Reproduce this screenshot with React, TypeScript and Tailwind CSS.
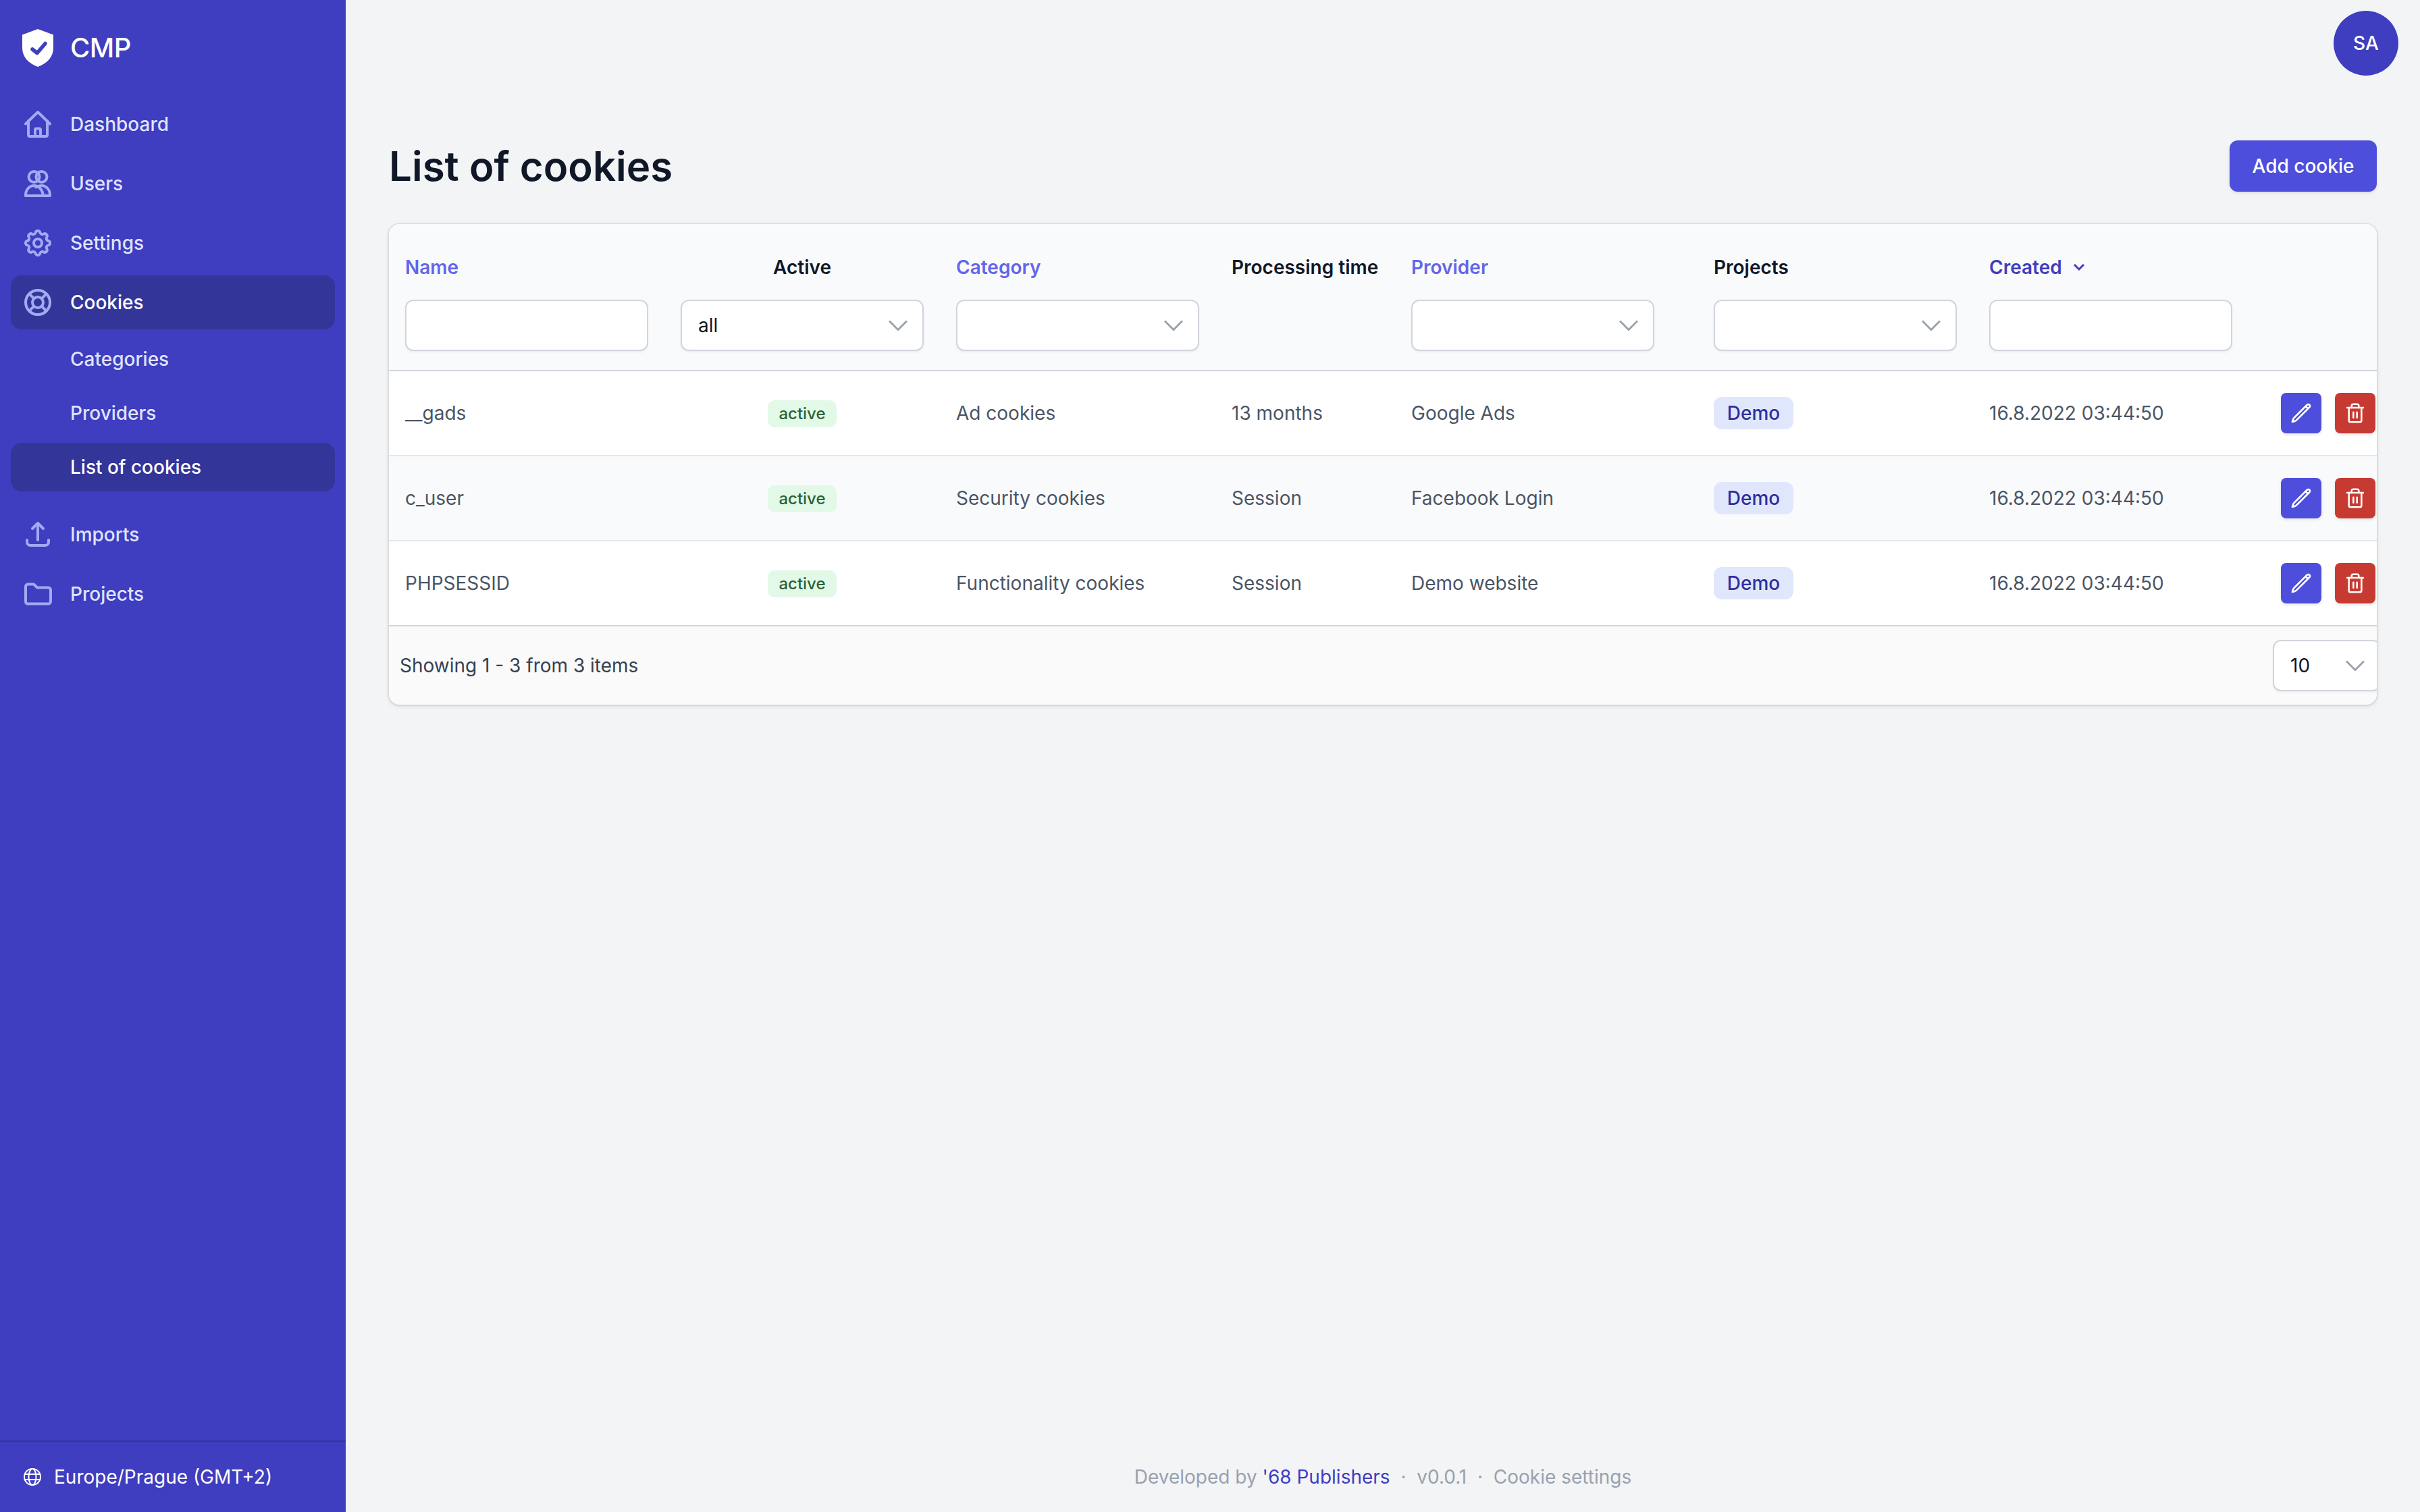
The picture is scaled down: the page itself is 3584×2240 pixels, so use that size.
import React from 'react';
import { Trash2 } from 'lucide-react';

const cookies = [
  { name: '__gads', category: 'Ad cookies', time: '13 months', provider: 'Google Ads' },
  { name: 'c_user', category: 'Security cookies', time: 'Session', provider: 'Facebook Login' },
  { name: 'PHPSESSID', category: 'Functionality cookies', time: 'Session', provider: 'Demo website' },
];

const Ico = ({ children }: { children: React.ReactNode }) => (
  <svg viewBox="0 0 48 48" fill="none" stroke="currentColor" strokeWidth="4" strokeLinecap="round" strokeLinejoin="round" className="h-12 w-12 shrink-0 text-[#a0abf2]">
    {children}
  </svg>
);

const HomeIcon = () => (
  <Ico>
    <path d="M6 23.500 24 6l18 17.500" />
    <path d="M10 19v21a2 2 0 0 0 2 2h24a2 2 0 0 0 2-2V19" />
    <path d="M20 42V32a1.500 1.500 0 0 1 1.500-1.500h5A1.500 1.500 0 0 1 28 32v10" />
  </Ico>
);

const UsersIcon = () => (
  <Ico>
    <circle cx="29.500" cy="14" r="8" />
    <circle cx="18.500" cy="14" r="8" />
    <path d="M6 42V41c0-8 5.500-14 12.500-14s12.500 6 13.500 15" />
    <path d="M6 42h36V41c0-8-5.500-14-12.500-14-3 0-6 .8-8.500 2.300" />
  </Ico>
);

const CogIcon = () => (
  <Ico>
    <g transform="scale(2)" strokeWidth="2">
      <path d="M10.325 4.317c.426-1.756 2.924-1.756 3.35 0a1.724 1.724 0 002.573 1.066c1.543-.94 3.31.826 2.37 2.37a1.724 1.724 0 001.065 2.572c1.756.426 1.756 2.924 0 3.35a1.724 1.724 0 00-1.066 2.573c.94 1.543-.826 3.31-2.37 2.37a1.724 1.724 0 00-2.572 1.065c-.426 1.756-2.924 1.756-3.35 0a1.724 1.724 0 00-2.573-1.066c-1.543.94-3.31-.826-2.37-2.37a1.724 1.724 0 00-1.065-2.572c-1.756-.426-1.756-2.924 0-3.35a1.724 1.724 0 001.066-2.573c-.94-1.543.826-3.31 2.37-2.37.996.608 2.296.07 2.572-1.065z" />
      <path d="M15 12a3 3 0 11-6 0 3 3 0 016 0z" />
    </g>
  </Ico>
);

const BuoyIcon = () => (
  <Ico>
    <circle cx="24" cy="24" r="18" />
    <circle cx="24" cy="24" r="8" />
    <path d="M11.500 11.500l6.800 6.800M29.700 18.300l6.800-6.800M29.700 29.700l6.800 6.800M18.300 29.700l-6.800 6.800" />
  </Ico>
);

const UploadIcon = () => (
  <Ico>
    <path d="M24 8v24M16 15l8-8 8 8" />
    <path d="M8 32v3a5 5 0 0 0 5 5h22a5 5 0 0 0 5-5v-3" />
  </Ico>
);

const FolderIcon = () => (
  <Ico>
    <path d="M6 13a3.500 3.500 0 0 1 3.500-3.500h8.500l5 5h16.500a3.500 3.500 0 0 1 3.500 3.500v17a3.500 3.500 0 0 1-3.500 3.500h-29A3.500 3.500 0 0 1 6 35z" />
  </Ico>
);

const Chevron = () => (
  <svg viewBox="0 0 28 16" fill="none" stroke="#9ca3af" strokeWidth="3" className="pointer-events-none absolute right-[24px] top-1/2 h-4 w-7 -translate-y-1/2">
    <path d="M1 1.500 14 14.500 27 1.500" />
  </svg>
);

const Select = ({ value, className }: { value?: string; className: string }) => (
  <div className={`relative h-[76px] ${className}`}>
    <select defaultValue={value} className="h-full w-full appearance-none rounded-[12px] border-2 border-gray-300 bg-white pl-6 text-[28px] font-normal text-gray-900 shadow-[0_2px_3px_rgba(0,0,0,0.05)]">
      <option value={value}>{value}</option>
    </select>
    <Chevron />
  </div>
);

const TextFilter = () => (
  <input className="block h-[76px] w-[360px] rounded-[12px] border-2 border-gray-300 bg-white shadow-[0_2px_3px_rgba(0,0,0,0.05)]" />
);

const NavItem = ({ icon, label, active }: { icon: React.ReactNode; label: string; active?: boolean }) => (
  <div className={`flex h-20 items-center gap-6 rounded-[16px] px-4 text-[28px] font-medium ${active ? 'bg-[#343598] text-white' : 'text-[#dfe3fc]'}`}>
    {icon}
    {label}
  </div>
);

const SubItem = ({ label, active }: { label: string; active?: boolean }) => (
  <div className={`flex h-[72px] items-center rounded-[16px] pl-[88px] text-[28px] font-medium ${active ? 'bg-[#343598] text-white' : 'text-[#dfe3fc]'}`}>
    {label}
  </div>
);

const thClass = 'px-6 pt-[44px] pb-[28px] text-left align-top text-[28px] font-semibold leading-[40px]';

const App: React.FC = () => {
  return (
    <div className="flex h-screen w-full bg-[#f3f4f6] font-[Inter,sans-serif]">
      {/* SIDEBAR */}
      <aside className="flex w-[512px] shrink-0 flex-col bg-[#3f3dc0]">
        <div className="flex h-[144px] items-center gap-[25px] pb-[2px] pl-[33px]">
          <svg viewBox="0 0 46 56" className="h-14 w-[46px]">
            <path d="M23 0 46 8.500V28c0 14-10 23-23 28C10 51 0 42 0 28V8.500z" fill="#fff" />
            <path d="m15 30 7 5.500L34 21.500" fill="none" stroke="#3f3dc0" strokeWidth="5.500" strokeLinecap="round" strokeLinejoin="round" />
          </svg>
          <span className="text-[40px] font-medium tracking-[-0.5px] text-white">CMP</span>
        </div>

        <nav className="flex flex-col gap-2 px-4">
          <NavItem icon={<HomeIcon />} label="Dashboard" />
          <NavItem icon={<UsersIcon />} label="Users" />
          <NavItem icon={<CogIcon />} label="Settings" />
          <NavItem icon={<BuoyIcon />} label="Cookies" active />
          <SubItem label="Categories" />
          <SubItem label="Providers" />
          <SubItem label="List of cookies" active />
          <div className="mt-4">
            <NavItem icon={<UploadIcon />} label="Imports" />
          </div>
          <NavItem icon={<FolderIcon />} label="Projects" />
        </nav>

        <div className="mt-auto flex h-[106px] items-center gap-[19px] border-t-2 border-[#343598] pl-[35px] text-[28px] text-white">
          <svg viewBox="0 0 26 26" fill="none" stroke="currentColor" strokeWidth="2" className="h-[26px] w-[26px]">
            <circle cx="13" cy="13" r="12" />
            <ellipse cx="13" cy="13" rx="5.500" ry="12" />
            <path d="M2 9h22M2 17h22" />
          </svg>
          Europe/Prague (GMT+2)
        </div>
      </aside>

      {/* MAIN */}
      <main className="flex min-w-0 flex-1 flex-col">
        <div className="flex justify-end pt-4 pr-8">
          <div className="flex h-24 w-24 items-center justify-center rounded-full bg-[#3f3dc0] text-[28px] font-medium text-white">SA</div>
        </div>

        <div className="mt-[96px] flex items-center justify-between px-16">
          <h1 className="text-[60px] font-semibold leading-[76px] text-gray-900">List of cookies</h1>
          <button className="flex h-[76px] w-[218px] items-center justify-center rounded-[12px] bg-[#4e4edc] text-[28px] font-medium text-white shadow-[0_2px_4px_rgba(0,0,0,0.1)]">Add cookie</button>
        </div>

        <div className="mx-16 mt-[48px] overflow-hidden rounded-[16px] bg-white shadow-[0_0_0_2px_rgba(0,0,0,0.05),0_2px_6px_rgba(0,0,0,0.12)]">
          <table className="w-full table-fixed">
            <colgroup>
              <col className="w-[408px]" />
              <col className="w-[408px]" />
              <col className="w-[408px]" />
              <col className="w-[266px]" />
              <col className="w-[448px]" />
              <col className="w-[408px]" />
              <col className="w-[408px]" />
              <col />
            </colgroup>
            <thead className="bg-[#f9fafb]">
              <tr className="border-b-2 border-gray-300">
                <th className={`${thClass} text-[#6366ea]`}>
                  Name
                  <div className="mt-[28px]"><TextFilter /></div>
                </th>
                <th className={`${thClass} text-gray-900`}>
                  <div className="text-center">Active</div>
                  <div className="mt-[28px]"><Select value="all" className="w-[360px]" /></div>
                </th>
                <th className={`${thClass} text-[#6366ea]`}>
                  Category
                  <div className="mt-[28px]"><Select className="w-[360px]" /></div>
                </th>
                <th className={`${thClass} whitespace-nowrap text-gray-900`}>Processing time</th>
                <th className={`${thClass} text-[#6366ea]`}>
                  Provider
                  <div className="mt-[28px]"><Select className="w-[360px]" /></div>
                </th>
                <th className={`${thClass} text-gray-900`}>
                  Projects
                  <div className="mt-[28px]"><Select className="w-[360px]" /></div>
                </th>
                <th className={`${thClass} text-[#3f3dc0]`}>
                  <div className="flex items-center gap-4">
                    Created
                    <svg viewBox="0 0 18 12" fill="none" stroke="currentColor" strokeWidth="3" className="h-3 w-[18px]">
                      <path d="m2 2 7 7 7-7" />
                    </svg>
                  </div>
                  <div className="mt-[28px]"><TextFilter /></div>
                </th>
                <th />
              </tr>
            </thead>
            <tbody className="text-[28px] text-gray-600">
              {cookies.map((c, i) => (
                <tr key={c.name} className={`h-[126px] border-b-2 ${i === 2 ? 'border-gray-300' : 'border-gray-200'} ${i === 1 ? 'bg-[#f9fafb]' : 'bg-white'}`}>
                  <td className="px-6">{c.name}</td>
                  <td className="px-6 text-center">
                    <span className="inline-flex h-10 w-[102px] -translate-y-[1px] items-center justify-center rounded-[10px] bg-[#e2f9e8] text-[24px] font-medium text-[#2d6235]">active</span>
                  </td>
                  <td className="px-6">{c.category}</td>
                  <td className="px-6">{c.time}</td>
                  <td className="px-6">{c.provider}</td>
                  <td className="px-6">
                    <span className="inline-flex h-12 w-[118px] items-center justify-center rounded-[12px] bg-[#e0e7fd] font-medium text-[#2f2f9e]">Demo</span>
                  </td>
                  <td className="px-6 whitespace-nowrap">16.8.2022 03:44:50</td>
                  <td className="pr-[2px]">
                    <div className="flex justify-end gap-5">
                      <button className="flex h-[60px] w-[60px] items-center justify-center rounded-[8px] bg-[#4e4edc] text-white shadow-[0_2px_4px_rgba(0,0,0,0.1)]">
                        <svg viewBox="0 0 24 24" fill="none" stroke="currentColor" strokeWidth="2" strokeLinecap="round" strokeLinejoin="round" className="h-8 w-8">
                          <path d="m16.862 4.487 1.687-1.688a1.875 1.875 0 1 1 2.652 2.652L6.832 19.82a4.500 4.500 0 0 1-1.897 1.13l-2.685.8.8-2.685a4.500 4.500 0 0 1 1.13-1.897L16.863 4.487zm0 0L19.500 7.125" />
                        </svg>
                      </button>
                      <button className="flex h-[60px] w-[60px] items-center justify-center rounded-[8px] bg-[#c73a32] text-white shadow-[0_2px_4px_rgba(0,0,0,0.1)]">
                        <Trash2 size={32} strokeWidth={1.9} />
                      </button>
                    </div>
                  </td>
                </tr>
              ))}
            </tbody>
          </table>

          <div className="flex h-[116px] items-center justify-between bg-[#fafafa] pl-4 text-[28px] text-gray-700">
            <span>Showing 1 - 3 from 3 items</span>
            <Select value="10" className="mr-[-6px] w-[160px]" />
          </div>
        </div>

        <footer className="mt-auto flex h-[104px] items-center justify-center whitespace-pre text-[28px] text-gray-400">
          Developed by <span className="text-[#3f3dc0]">'68 Publishers</span>{'  ·  '}v0.0.1{'  ·  '}Cookie settings
        </footer>
      </main>
    </div>
  );
};

export default App;
